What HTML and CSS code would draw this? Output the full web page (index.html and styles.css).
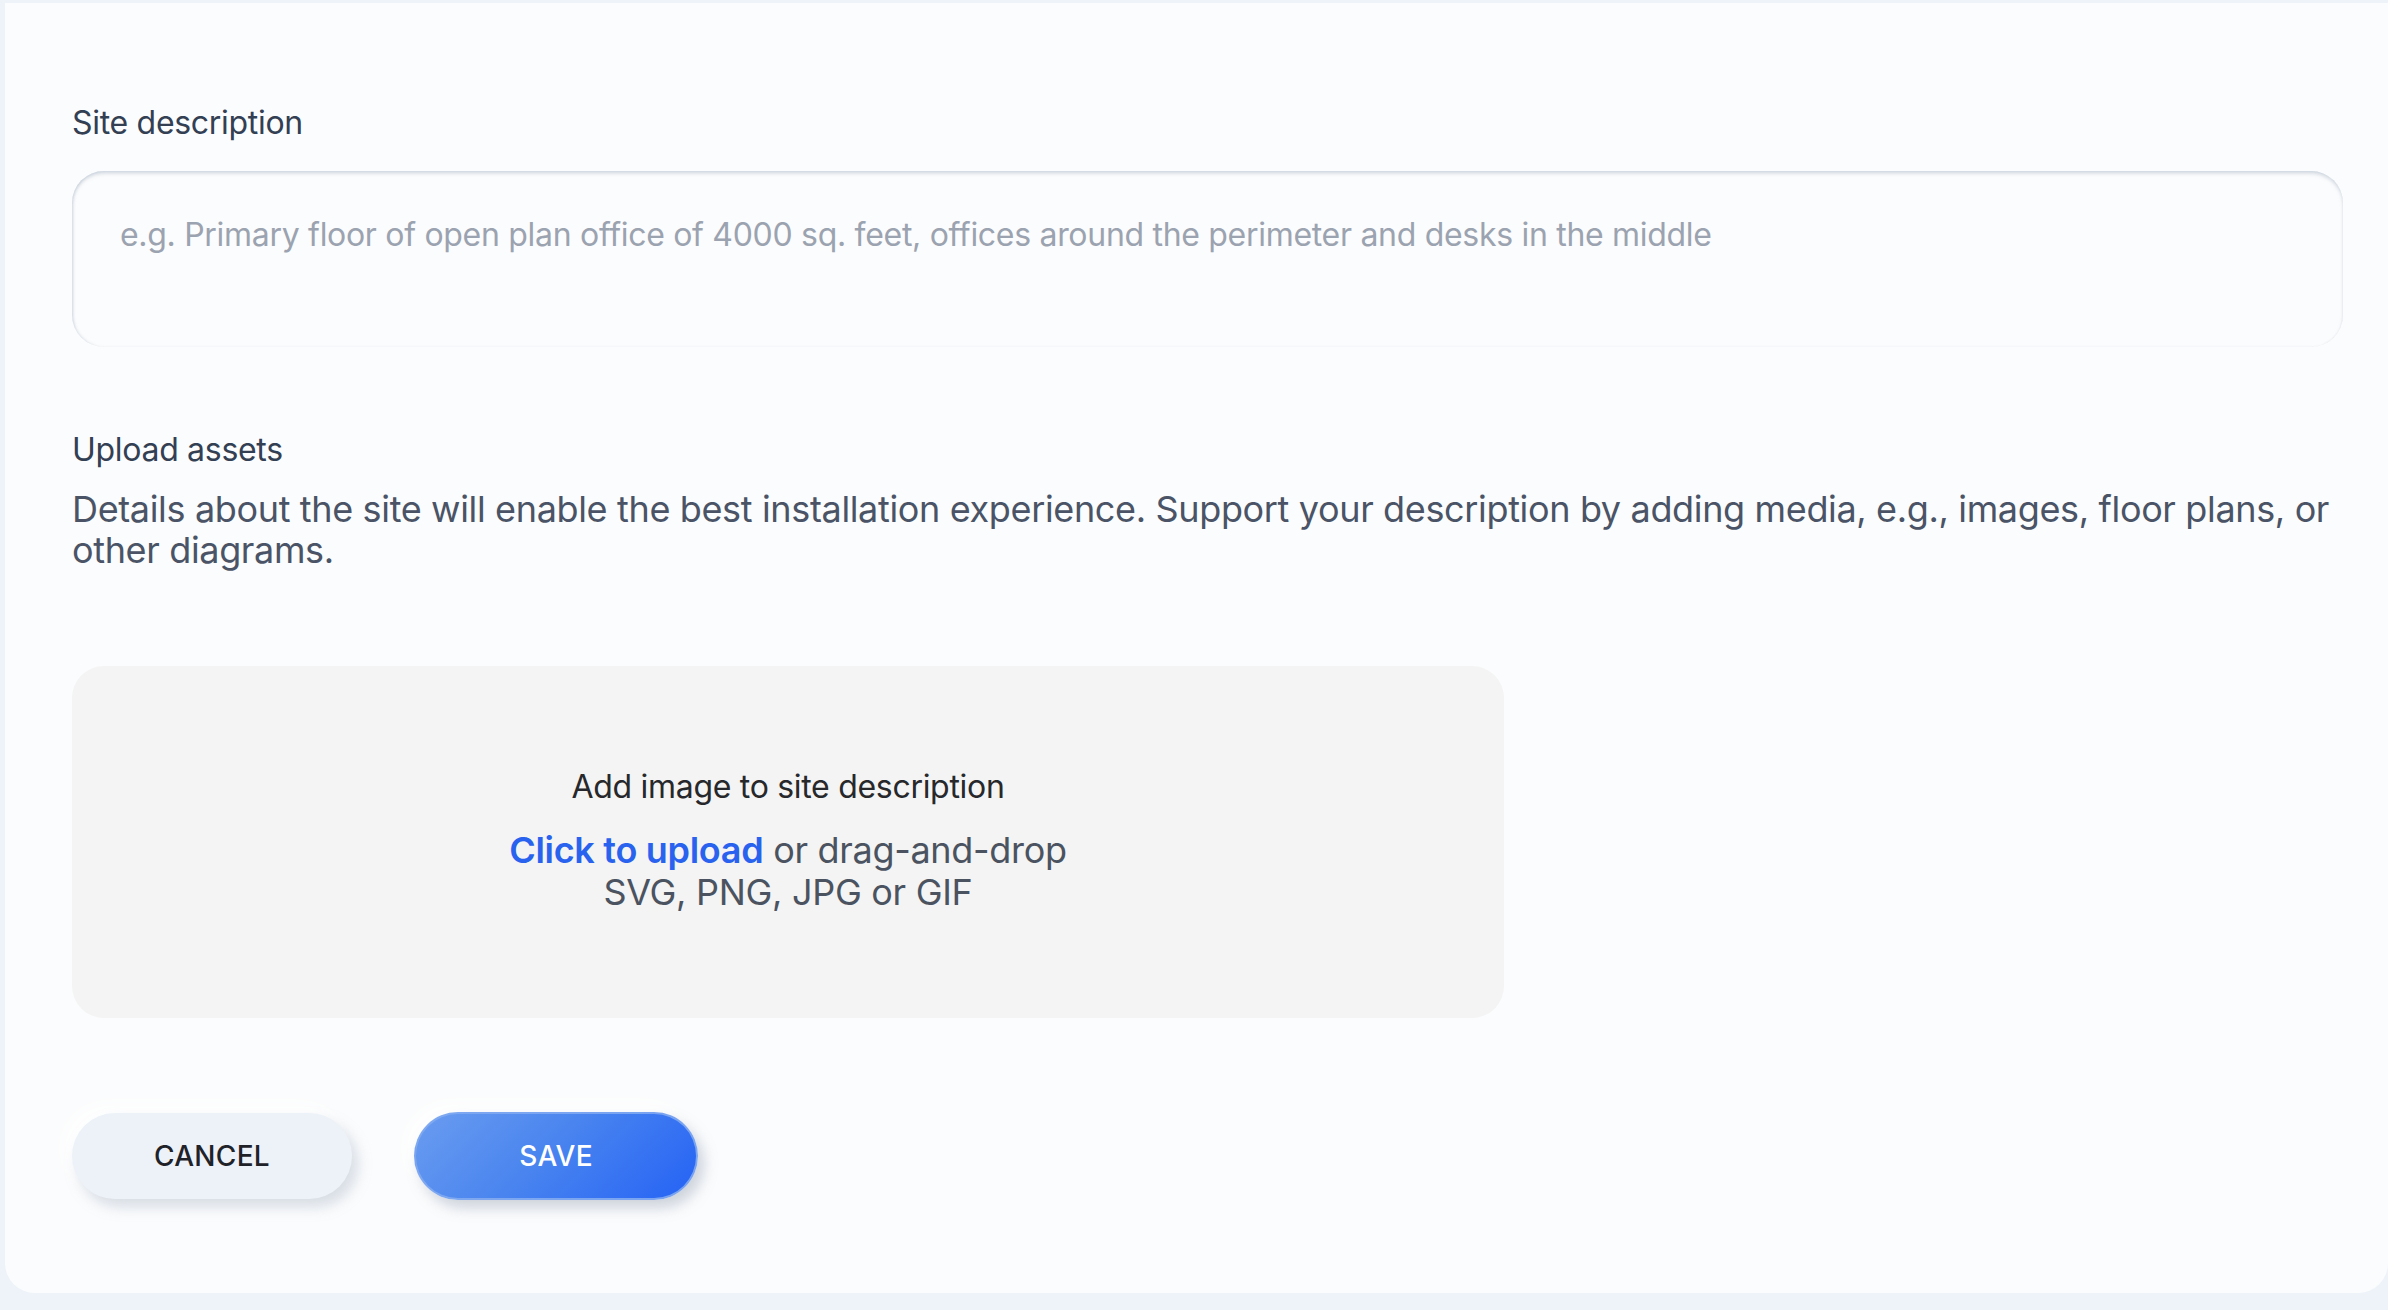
FILE: index.html
```html
<!DOCTYPE html>
<html lang="en">
<head>
<meta charset="utf-8">
<title>Site description</title>
<link rel="stylesheet" href="styles.css">
</head>
<body>
  <main class="card">
    <section class="field">
      <label class="label" for="desc">Site description</label>
      <textarea id="desc" class="textarea" placeholder="e.g. Primary floor of open plan office of 4000 sq. feet, offices around the perimeter and desks in the middle"></textarea>
    </section>

    <section class="assets">
      <div class="label">Upload assets</div>
      <p class="help">Details about the site will enable the best installation experience. Support your description by adding media, e.g., images, floor plans, or other diagrams.</p>
    </section>

    <div class="dropzone">
      <div class="drop-title">Add image to site description</div>
      <div class="drop-lines">
        <div><span class="drop-link">Click to upload</span> or drag-and-drop</div>
        <div>SVG, PNG, JPG or GIF</div>
      </div>
    </div>

    <div class="actions">
      <button class="btn btn-cancel" type="button">CANCEL</button>
      <button class="btn btn-save" type="button">SAVE</button>
    </div>
  </main>
</body>
</html>
```

FILE: styles.css
```css
* { box-sizing: border-box; }

html, body {
  margin: 0;
  height: 100%;
}

body {
  background: #edf3f9;
  padding: 3px 0 0 5px;
  font-family: Inter, "Noto Sans", "Liberation Sans", sans-serif;
  letter-spacing: -0.3px;
  overflow: hidden;
}

.card {
  background: #fbfcfd;
  height: 1290px;
  border-radius: 0 0 30px 30px;
  padding: 100px 45px 0 67px;
}

.label {
  display: block;
  font-size: 32px;
  line-height: 40px;
  color: #334054;
}

.textarea {
  display: block;
  width: 100%;
  height: 176px;
  margin-top: 28px;
  padding: 44px 48px;
  border: none;
  border-radius: 32px;
  background: #fbfcfd;
  font-family: inherit;
  font-size: 32px;
  line-height: 40px;
  letter-spacing: -0.3px;
  color: #2f3b4e;
  resize: none;
  outline: none;
  box-shadow:
    inset 0 3px 4px -1px rgba(148, 163, 184, 0.45),
    inset 2px 0 3px -1px rgba(148, 163, 184, 0.3),
    inset -1px 0 2px -1px rgba(148, 163, 184, 0.2);
}

.textarea::placeholder {
  color: #9ba3b0;
  opacity: 1;
}

.assets {
  margin-top: 83px;
}

.help {
  margin: 19px 0 0;
  font-size: 36px;
  line-height: 41px;
  letter-spacing: -0.35px;
  color: #4a5466;
}

.dropzone {
  margin-top: 95px;
  width: 1432px;
  height: 352px;
  background: #f3f4f3;
  border-radius: 32px;
  display: flex;
  flex-direction: column;
  align-items: center;
  justify-content: center;
  text-align: center;
  gap: 22px;
  padding-bottom: 4px;
}

.drop-title {
  font-size: 32px;
  line-height: 40px;
  color: #27282c;
}

.drop-lines {
  font-size: 36px;
  line-height: 42px;
  color: #4b5361;
}

.drop-link {
  color: #2962ee;
  font-weight: 600;
}

.actions {
  margin-top: 94px;
  display: flex;
  align-items: center;
  gap: 62px;
}

.btn {
  height: 86px;
  border-radius: 43px;
  font-family: inherit;
  font-size: 28px;
  font-weight: 500;
  letter-spacing: 0.3px;
  cursor: pointer;
}

.btn-cancel {
  width: 280px;
  border: none;
  background: #edf2f8;
  color: #1f2329;
  box-shadow:
    6px 8px 14px rgba(148, 163, 184, 0.35),
    -8px -8px 18px rgba(255, 255, 255, 0.95);
}

.btn-save {
  width: 284px;
  height: 88px;
  border-radius: 44px;
  border: 2px solid rgba(130, 170, 240, 0.9);
  background: linear-gradient(135deg, #6a9cf0 0%, #4a85ef 45%, #2563f5 100%);
  color: #ffffff;
  box-shadow:
    6px 8px 14px rgba(120, 135, 160, 0.35),
    -8px -8px 18px rgba(255, 255, 255, 0.95);
}
```
